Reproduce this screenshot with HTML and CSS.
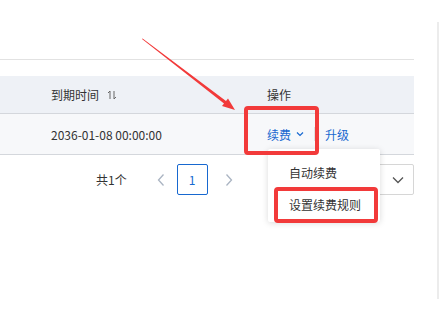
FILE: index.html
```html
<!DOCTYPE html>
<html lang="zh-CN">
<head>
    <meta charset="UTF-8">
    <title>续费</title>
    <link rel="stylesheet" href="styles.css">
</head>
<body>
    <div class="page">
        <div class="main">
            <div class="table">
                <div class="thead">
                    <div class="cell first"></div>
                    <div class="cell time">到期时间
                        <svg class="sort" width="10" height="10" viewBox="0 0 10 10">
                            <path d="M3 9V1M1 3L3 1" fill="none" stroke="#666" stroke-width="1"/>
                            <path d="M7 1V9M7 9L9 7" fill="none" stroke="#666" stroke-width="1"/>
                        </svg>
                    </div>
                    <div class="cell ops">操作</div>
                </div>
                <div class="trow">
                    <div class="cell first"></div>
                    <div class="cell time">2036-01-08 00:00:00</div>
                    <div class="cell ops">
                        <a class="link">续费
                            <svg class="chev" width="8" height="6" viewBox="0 0 8 6">
                                <path d="M1 1.5L4 4.5L7 1.5" fill="none" stroke="#1768d0" stroke-width="1.2"/>
                            </svg>
                        </a>
                        <span class="divider"></span>
                        <a class="link">升级</a>
                    </div>
                </div>
            </div>
            <div class="pager">
                <span class="total">共1个</span>
                <svg class="arrow-btn" width="8" height="14" viewBox="0 0 8 14">
                    <path d="M6.5 1.5L1.5 7L6.5 12.5" fill="none" stroke="#aab4c2" stroke-width="1.3"/>
                </svg>
                <span class="page-num">1</span>
                <svg class="arrow-btn" width="8" height="14" viewBox="0 0 8 14">
                    <path d="M1.5 1.5L6.5 7L1.5 12.5" fill="none" stroke="#aab4c2" stroke-width="1.3"/>
                </svg>
                <div class="size-select">
                    <svg width="12" height="8" viewBox="0 0 12 8">
                        <path d="M1 1.5L6 6.5L11 1.5" fill="none" stroke="#555" stroke-width="1.3"/>
                    </svg>
                </div>
            </div>
        </div>
        <div class="side"></div>
    </div>

    <!-- dropdown of 续费 -->
    <div class="dropdown">
        <div class="item">自动续费</div>
        <div class="item">设置续费规则</div>
    </div>

    <!-- annotations -->
    <div class="mark mark-renew"></div>
    <div class="mark mark-rule"></div>
    <svg class="pointer" width="442" height="322" viewBox="0 0 442 322">
        <polygon points="142,39 142.6,38.4 226,101 228,98.5 235,110 222,106 224,103.4" fill="#f23a3a"/>
    </svg>
</body>
</html>
```

FILE: styles.css
```css
* {
    margin: 0;
    padding: 0;
    box-sizing: border-box;
}
body {
    background-color: #fff;
    font-family: "Noto Sans CJK SC", "Noto Sans", sans-serif;
    font-size: 12px;
    color: #333;
    width: 442px;
    height: 322px;
    overflow: hidden;
    position: relative;
}
.page {
    display: flex;
}
.main {
    width: 414px;
    padding-top: 59px;
}
.side {
    margin-left: 23px;
    margin-top: 22px;
    width: 2px;
    height: 277px;
    background-color: #ececec;
}

.table {
    border-top: 1px solid #e2e2e2;
    padding-top: 16px;
}
.thead, .trow {
    display: grid;
    grid-template-columns: 51px 216px 1fr;
    align-items: center;
}
.thead {
    height: 38px;
    background-color: #eef1f6;
    border-bottom: 1px solid #d4d7dc;
}
.trow {
    height: 41px;
    background-color: #f7f8fa;
    border-bottom: 1px solid #d4d7dc;
}
.cell {
    display: flex;
    align-items: center;
}
.sort {
    margin-left: 8px;
}
.link {
    color: #1768d0;
    display: flex;
    align-items: center;
}
.chev {
    margin-left: 5px;
}
.divider {
    width: 1px;
    height: 14px;
    background-color: #e0e0e0;
    margin: 0 10px 0 10px;
}

.pager {
    display: flex;
    align-items: center;
    height: 31px;
    margin-top: 9px;
    padding-left: 96px;
}
.total {
    margin-right: 30px;
}
.page-num {
    width: 31px;
    height: 31px;
    margin: 0 17px 0 12px;
    border: 1px solid #1768d0;
    border-radius: 2px;
    color: #1768d0;
    display: flex;
    align-items: center;
    justify-content: center;
}
.size-select {
    margin-left: auto;
    width: 120px;
    height: 31px;
    border: 1px solid #d6d6d6;
    border-radius: 2px;
    display: flex;
    align-items: center;
    justify-content: flex-end;
    padding-right: 9px;
}

.dropdown {
    position: absolute;
    left: 268px;
    top: 149px;
    width: 112px;
    height: 73px;
    padding-top: 8px;
    background-color: #fff;
    border-radius: 2px;
    box-shadow: 0 1px 6px rgba(0, 0, 0, 0.15);
}
.item {
    height: 32px;
    line-height: 32px;
    padding-left: 21px;
}

.mark {
    position: absolute;
    border: 4px solid #f23a3a;
    border-radius: 4px;
}
.mark-renew {
    left: 244px;
    top: 106px;
    width: 75px;
    height: 49px;
}
.mark-rule {
    left: 274px;
    top: 187px;
    width: 104px;
    height: 36px;
}
.pointer {
    position: absolute;
    left: 0;
    top: 0;
}
```
